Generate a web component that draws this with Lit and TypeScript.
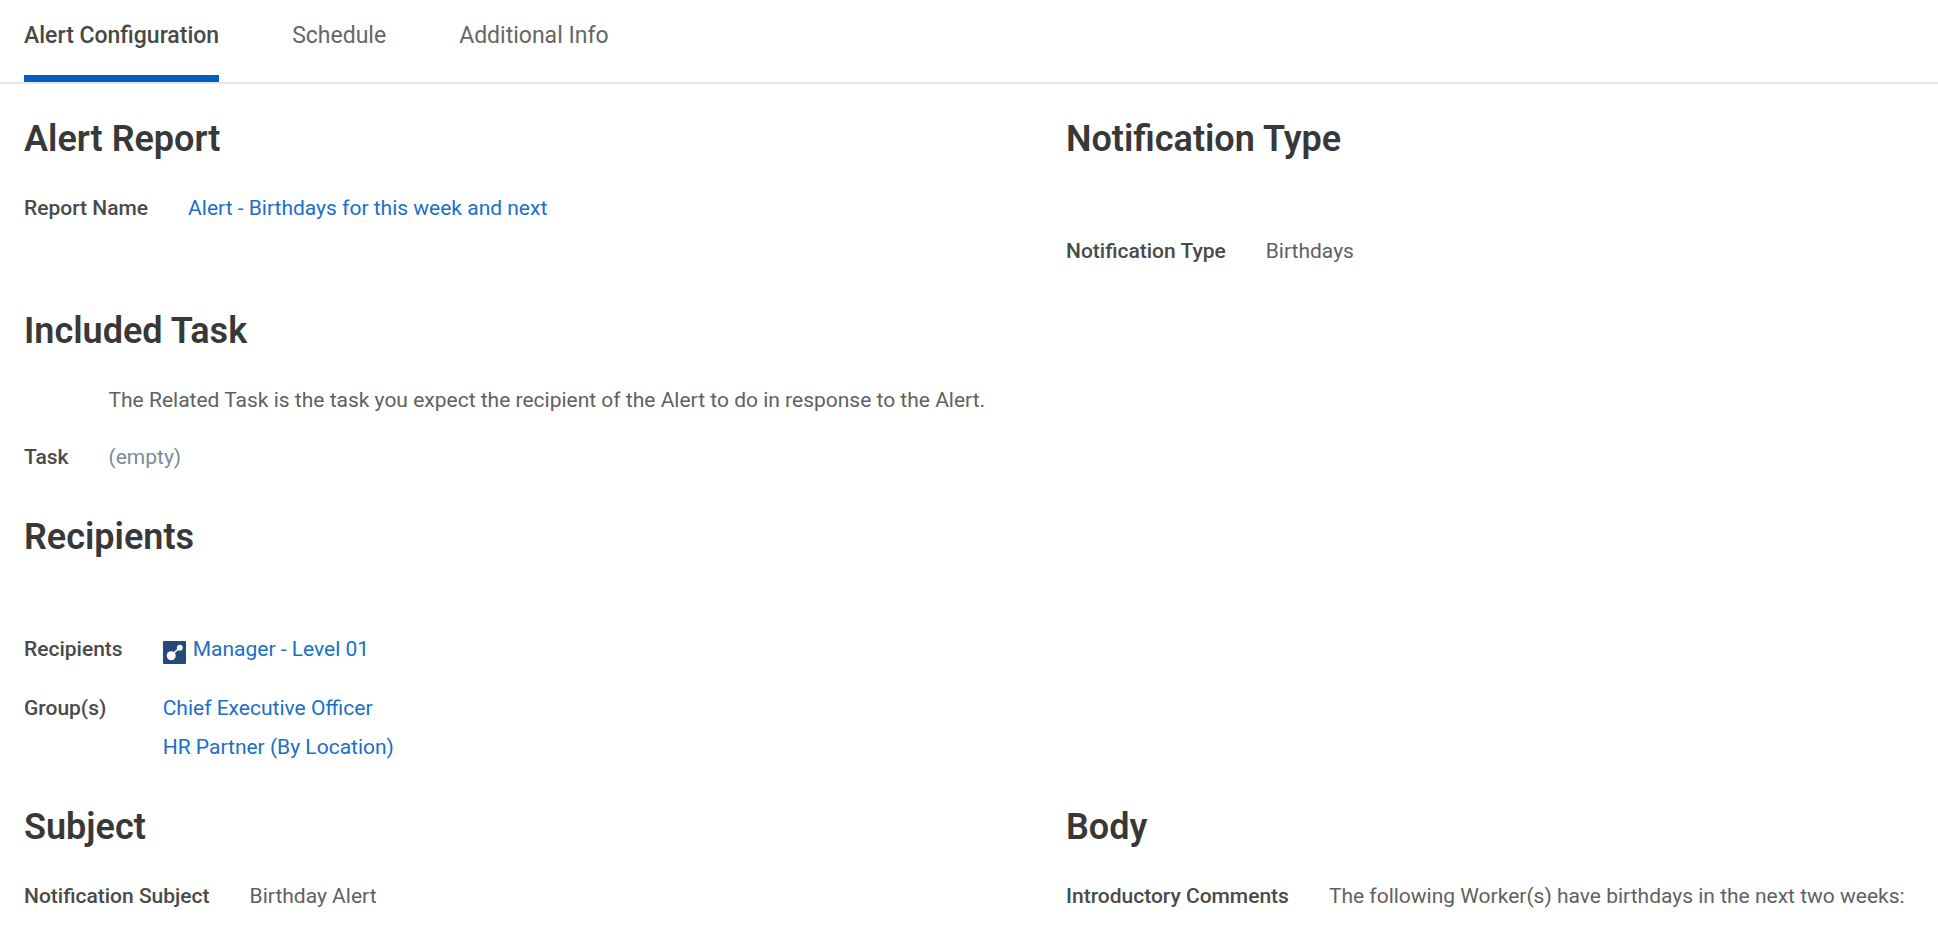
import { LitElement, html, css, nothing } from "lit";
import { customElement, property, state } from "lit/decorators.js";

@customElement("tab-bar")
class TabBar extends LitElement {
  static styles = css`
    :host {
      display: block;
    }
    .tabs {
      display: flex;
      gap: 73px;
      padding: 0 24px;
      border-bottom: 2px solid #e4e6ea;
    }
    .tab {
      padding: 20px 0 23px;
      border: 0;
      border-bottom: 7px solid transparent;
      background: none;
      font: 400 23px/32px Roboto, sans-serif;
      color: #666;
      white-space: nowrap;
      cursor: pointer;
    }
    .tab.active {
      font-weight: 500;
      color: #484848;
      border-bottom-color: #0460be;
    }
  `;

  @property({ attribute: false }) tabs: string[] = [];
  @state() private selected = 0;

  render() {
    return html`<div class="tabs" role="tablist">
      ${this.tabs.map(
        (name, i) => html`<button
          type="button"
          role="tab"
          class="tab ${i === this.selected ? "active" : ""}"
          aria-selected=${i === this.selected ? "true" : "false"}
          @click=${() => (this.selected = i)}
        >${name}</button>`
      )}
    </div>`;
  }
}

type Value = { text: string; kind?: "link" | "empty"; icon?: boolean };
type Field = { label?: string; values: Value[] };
type Section = { title: string; fields: Field[]; side?: "start" | "end"; spaced?: boolean };

const sections: Section[] = [
  {
    title: "Alert Report",
    fields: [{ label: "Report Name", values: [{ text: "Alert - Birthdays for this week and next", kind: "link" }] }],
  },
  {
    title: "Notification Type",
    side: "end",
    spaced: true,
    fields: [{ label: "Notification Type", values: [{ text: "Birthdays" }] }],
  },
  {
    title: "Included Task",
    fields: [
      {
        values: [
          { text: "The Related Task is the task you expect the recipient of the Alert to do in response to the Alert." },
        ],
      },
      { label: "Task", values: [{ text: "(empty)", kind: "empty" }] },
    ],
  },
  {
    title: "Recipients",
    spaced: true,
    fields: [
      { label: "Recipients", values: [{ text: "Manager - Level 01", kind: "link", icon: true }] },
      {
        label: "Group(s)",
        values: [
          { text: "Chief Executive Officer", kind: "link" },
          { text: "HR Partner (By Location)", kind: "link" },
        ],
      },
    ],
  },
  {
    title: "Subject",
    fields: [{ label: "Notification Subject", values: [{ text: "Birthday Alert" }] }],
  },
  {
    title: "Body",
    side: "end",
    fields: [
      {
        label: "Introductory Comments",
        values: [{ text: "The following Worker(s) have birthdays in the next two weeks:" }],
      },
    ],
  },
];

@customElement("app-root")
class AppRoot extends LitElement {
  static styles = css`
    :host {
      display: block;
      background: #fff;
      font: 400 21px/39px Roboto, sans-serif;
      color: #616161;
    }
    .content {
      display: grid;
      grid-template-columns: 7fr 6fr;
      column-gap: 34px;
      row-gap: 40px;
      padding: 35px 8px 0 24px;
    }
    .section {
      grid-column: 1;
    }
    .section.end {
      grid-column: 2;
    }
    .title {
      margin: 0 0 30px;
      font-size: 36px;
      line-height: 40px;
      font-weight: 600;
      color: #383838;
    }
    .title.spaced {
      margin-bottom: 73px;
    }
    .fields {
      display: grid;
      grid-template-columns: max-content 1fr;
      gap: 18px 40px;
      margin: 0;
    }
    .label {
      font-weight: 500;
      color: #4a4a4a;
    }
    .value {
      margin: 0;
    }
    .line.with-icon {
      display: flex;
      gap: 7px;
      padding-bottom: 2px;
    }
    .line.empty {
      color: #7b8b98;
    }
    .link {
      color: #1a6fc9;
      text-decoration: none;
    }
    .link:hover {
      text-decoration: underline;
    }
    .icon {
      flex: none;
      width: 23px;
      height: 23px;
      margin-top: 11px;
    }
  `;

  private renderValue(v: Value) {
    return html`<div class="line ${v.icon ? "with-icon" : ""} ${v.kind === "empty" ? "empty" : ""}">
      ${v.icon
        ? html`<svg class="icon" viewBox="0 0 23 23" aria-hidden="true">
            <rect width="23" height="23" rx="1" fill="#25497b" />
            <path d="M8 14.5 17 6.5" stroke="#fff" stroke-width="1.6" />
            <circle cx="8.2" cy="14.7" r="4.5" fill="#fff" />
            <circle cx="16.8" cy="6.7" r="2.9" fill="#fff" />
          </svg>`
        : nothing}${v.kind === "link" ? html`<a class="link" href="#">${v.text}</a>` : v.text}
    </div>`;
  }

  render() {
    return html`
      <tab-bar .tabs=${["Alert Configuration", "Schedule", "Additional Info"]}></tab-bar>
      <main class="content">
        ${sections.map(
          (s) => html`<section class="section ${s.side ?? "start"}">
            <h2 class="title ${s.spaced ? "spaced" : ""}">${s.title}</h2>
            <dl class="fields">
              ${s.fields.map(
                (f) => html`<dt class="label">${f.label ?? nothing}</dt>
                  <dd class="value">${f.values.map((v) => this.renderValue(v))}</dd>`
              )}
            </dl>
          </section>`
        )}
      </main>
    `;
  }
}
